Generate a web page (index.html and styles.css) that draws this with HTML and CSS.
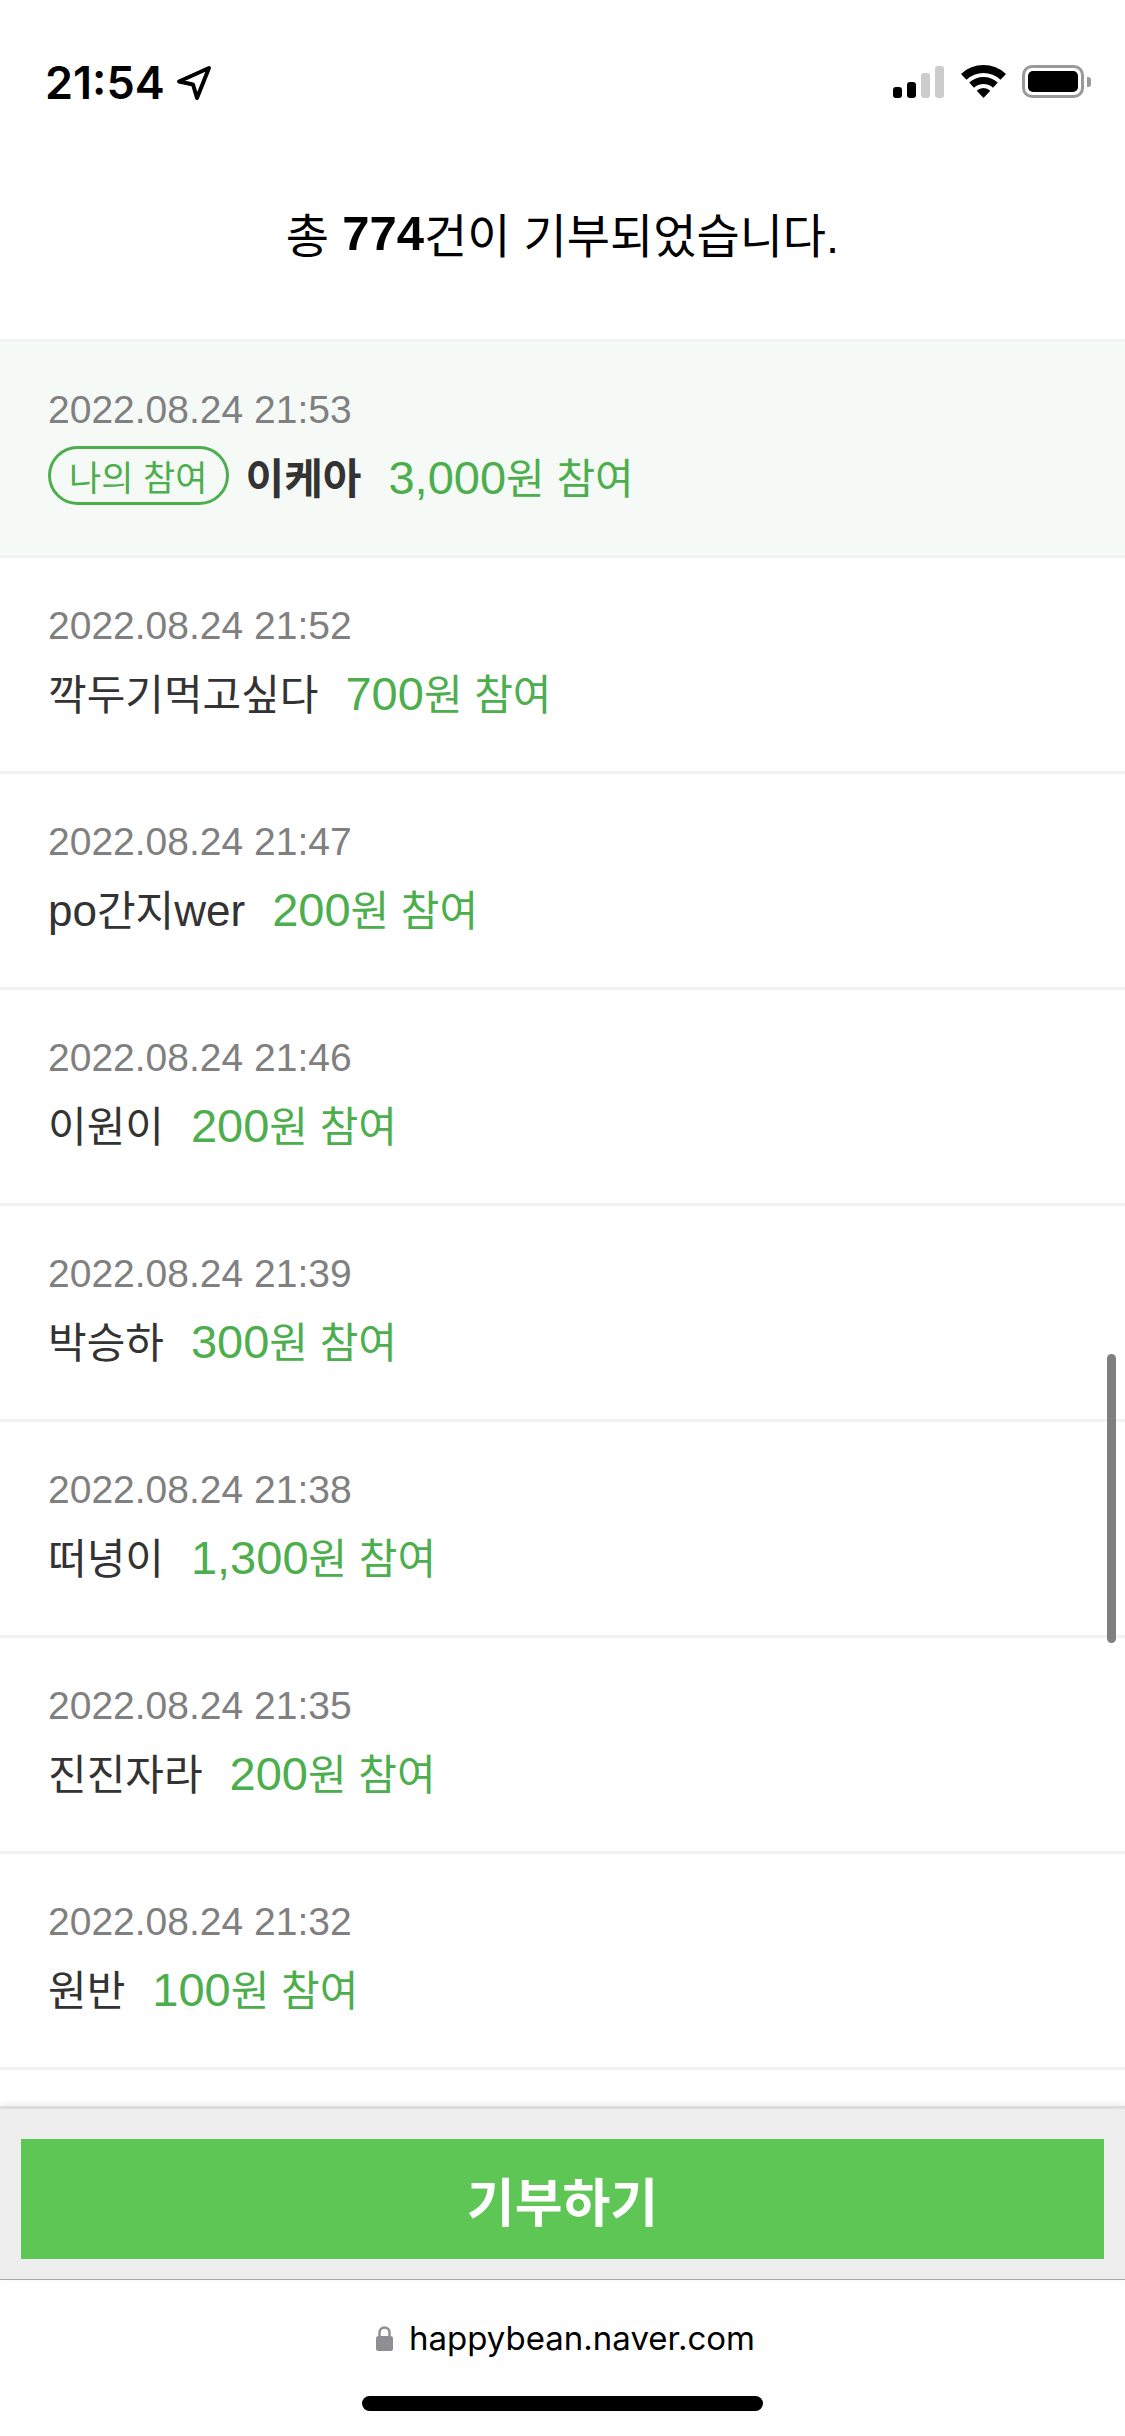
FILE: index.html
```html
<!DOCTYPE html>
<html lang="ko">
<head>
  <meta charset="UTF-8">
  <title>기부 내역</title>
  <meta name="viewport" content="width=device-width, initial-scale=1.0">
  <link rel="stylesheet" href="styles.css">
</head>
<body>

<div class="status-bar">
  <div class="status-left">
    <span class="clock">21:54</span>
    <svg class="arrow" width="36" height="36" viewBox="0 0 36 36"><path d="M33 3 L3 16.5 L17 19.5 L21 33 Z" fill="none" stroke="#000" stroke-width="4" stroke-linejoin="round"/></svg>
  </div>
  <div class="status-right">
    <div class="signal">
      <span class="bar bar1"></span>
      <span class="bar bar2"></span>
      <span class="bar bar3 off"></span>
      <span class="bar bar4 off"></span>
    </div>
    <svg class="wifi" width="45" height="33" viewBox="0 0 45 33">
      <path d="M0 8.9 A33 33 0 0 1 45 8.9 L39.5 14.7 A25 25 0 0 0 5.5 14.7 Z"/>
      <path d="M8.2 17.6 A21 21 0 0 1 36.8 17.6 L32 22.8 A14 14 0 0 0 13 22.8 Z"/>
      <path d="M15.7 25.7 A10 10 0 0 1 29.3 25.7 L22.5 33 Z"/>
    </svg>
    <div class="battery">
      <div class="battery-body"><div class="battery-level"></div></div>
      <div class="battery-nub"></div>
    </div>
  </div>
</div>

<div class="summary">총 <strong>774</strong>건이 기부되었습니다.</div>

<ul class="list">
  <li class="row mine">
    <div class="date">2022.08.24 21:53</div>
    <div class="line">
      <span class="badge">나의 참여</span>
      <span class="name bold">이케아</span>
      <span class="amount"><span class="num">3,000</span>원 참여</span>
    </div>
  </li>
  <li class="row">
    <div class="date">2022.08.24 21:52</div>
    <div class="line">
      <span class="name">깍두기먹고싶다</span>
      <span class="amount"><span class="num">700</span>원 참여</span>
    </div>
  </li>
  <li class="row">
    <div class="date">2022.08.24 21:47</div>
    <div class="line">
      <span class="name"><span class="latin">po</span>간지<span class="latin">wer</span></span>
      <span class="amount"><span class="num">200</span>원 참여</span>
    </div>
  </li>
  <li class="row">
    <div class="date">2022.08.24 21:46</div>
    <div class="line">
      <span class="name">이원이</span>
      <span class="amount"><span class="num">200</span>원 참여</span>
    </div>
  </li>
  <li class="row">
    <div class="date">2022.08.24 21:39</div>
    <div class="line">
      <span class="name">박승하</span>
      <span class="amount"><span class="num">300</span>원 참여</span>
    </div>
  </li>
  <li class="row">
    <div class="date">2022.08.24 21:38</div>
    <div class="line">
      <span class="name">떠녕이</span>
      <span class="amount"><span class="num">1,300</span>원 참여</span>
    </div>
  </li>
  <li class="row">
    <div class="date">2022.08.24 21:35</div>
    <div class="line">
      <span class="name">진진자라</span>
      <span class="amount"><span class="num">200</span>원 참여</span>
    </div>
  </li>
  <li class="row">
    <div class="date">2022.08.24 21:32</div>
    <div class="line">
      <span class="name">원반</span>
      <span class="amount"><span class="num">100</span>원 참여</span>
    </div>
  </li>
</ul>

<div class="scrollbar"></div>

<div class="donate-bar">
  <button class="donate">기부하기</button>
</div>

<div class="browser-bar">
  <div class="url">
    <svg class="lock" width="17" height="25" viewBox="0 0 17 25">
      <path d="M3.5 11 V6.5 A5 5 0 0 1 13.5 6.5 V11" fill="none" stroke="#8e8e93" stroke-width="2.4"/>
      <rect x="0" y="10" width="17" height="15" rx="2.5" fill="#8e8e93"/>
    </svg>
    <span>happybean.naver.com</span>
  </div>
  <div class="home-indicator"></div>
</div>

</body>
</html>
```

FILE: styles.css
```css
* {
  box-sizing: border-box;
}

html, body {
  margin: 0;
  padding: 0;
}

body {
  position: relative;
  width: 1125px;
  height: 2436px;
  overflow: hidden;
  display: flex;
  flex-direction: column;
  background: #fff;
  font-family: 'Liberation Sans', 'Noto Sans CJK KR', sans-serif;
  color: #333;
}

/* status bar */
.status-bar {
  height: 118px;
  flex: none;
  display: flex;
  justify-content: space-between;
  align-items: flex-start;
  padding: 58px 34px 0 45px;
}

.status-left {
  display: flex;
  align-items: center;
  gap: 11px;
  color: #000;
}

.clock {
  font-family: Inter, sans-serif;
  font-size: 45px;
  font-weight: 600;
  line-height: 50px;
}

.status-right {
  display: flex;
  align-items: flex-end;
  margin-top: 7px;
}

.signal {
  display: flex;
  align-items: flex-end;
  gap: 5px;
  margin-right: 17px;
}

.bar {
  width: 9px;
  background: #000;
  border-radius: 3px;
}

.bar.off {
  background: #ccc;
}

.bar1 { height: 11px; }
.bar2 { height: 16px; }
.bar3 { height: 25px; }
.bar4 { height: 32px; }

.wifi {
  margin-right: 16px;
  fill: #000;
}

.battery {
  display: flex;
  align-items: center;
  gap: 3px;
}

.battery-body {
  width: 62px;
  height: 33px;
  border: 3px solid #999;
  border-radius: 10px;
  padding: 3px;
}

.battery-level {
  width: 100%;
  height: 100%;
  background: #000;
  border-radius: 5px;
}

.battery-nub {
  width: 4px;
  height: 10px;
  background: #999;
  border-radius: 0 3px 3px 0;
}

/* summary */
.summary {
  height: 224px;
  flex: none;
  display: flex;
  align-items: center;
  justify-content: center;
  padding-top: 8px;
  white-space: pre;
  border-bottom: 3px solid #f2f2f2;
  font-size: 47px;
  color: #000;
}

.summary strong {
  font-size: 49px;
}

/* list */
.list {
  flex: 1;
  min-height: 0;
  margin: 0;
  padding: 0;
  list-style: none;
  overflow: hidden;
}

.row {
  height: 216px;
  padding: 45px 48px 0;
  border-bottom: 3px solid #f2f2f2;
}

.row.mine {
  background: #f6faf7;
}

.date {
  font-size: 39px;
  line-height: 46px;
  color: #808080;
}

.line {
  display: flex;
  align-items: center;
  height: 68px;
  margin-top: 8px;
  white-space: pre;
}

.badge {
  height: 59px;
  margin-right: 17px;
  padding: 0 18px;
  display: flex;
  align-items: center;
  border: 3px solid #4cae4c;
  border-radius: 30px;
  font-size: 35px;
  color: #4cae4c;
}

.name {
  margin-right: 27px;
  font-size: 42px;
}

.name.bold {
  font-weight: 700;
}

.latin {
  font-size: 44px;
}

.amount {
  font-size: 42px;
  color: #4cae4c;
}

.num {
  font-size: 47px;
}

/* overlay scroll indicator */
.scrollbar {
  position: absolute;
  left: 1107px;
  top: 1354px;
  width: 9px;
  height: 289px;
  border-radius: 5px;
  background: #7f7f7f;
}

/* bottom */
.donate-bar {
  flex: none;
  height: 174px;
  padding: 30px 21px 21px;
  background: #eee;
  border-top: 3px solid #ddd;
  border-bottom: 1px solid #a5a5a5;
  box-shadow: 0 -2px 6px rgba(0, 0, 0, 0.08);
  position: relative;
}

.donate {
  display: block;
  width: 100%;
  height: 120px;
  padding: 0;
  border: none;
  background: #5ec654;
  color: #fff;
  font-family: inherit;
  font-size: 52px;
  font-weight: 700;
}

.browser-bar {
  flex: none;
  height: 156px;
  display: flex;
  flex-direction: column;
  align-items: center;
  background: #fefefe;
}

.url {
  display: flex;
  align-items: center;
  gap: 16px;
  height: 50px;
  margin-top: 33px;
  padding-left: 6px;
  font-family: Inter, sans-serif;
  font-size: 33px;
  color: #000;
}

.home-indicator {
  width: 401px;
  height: 15px;
  margin-top: 33px;
  border-radius: 8px;
  background: #000;
}
```
